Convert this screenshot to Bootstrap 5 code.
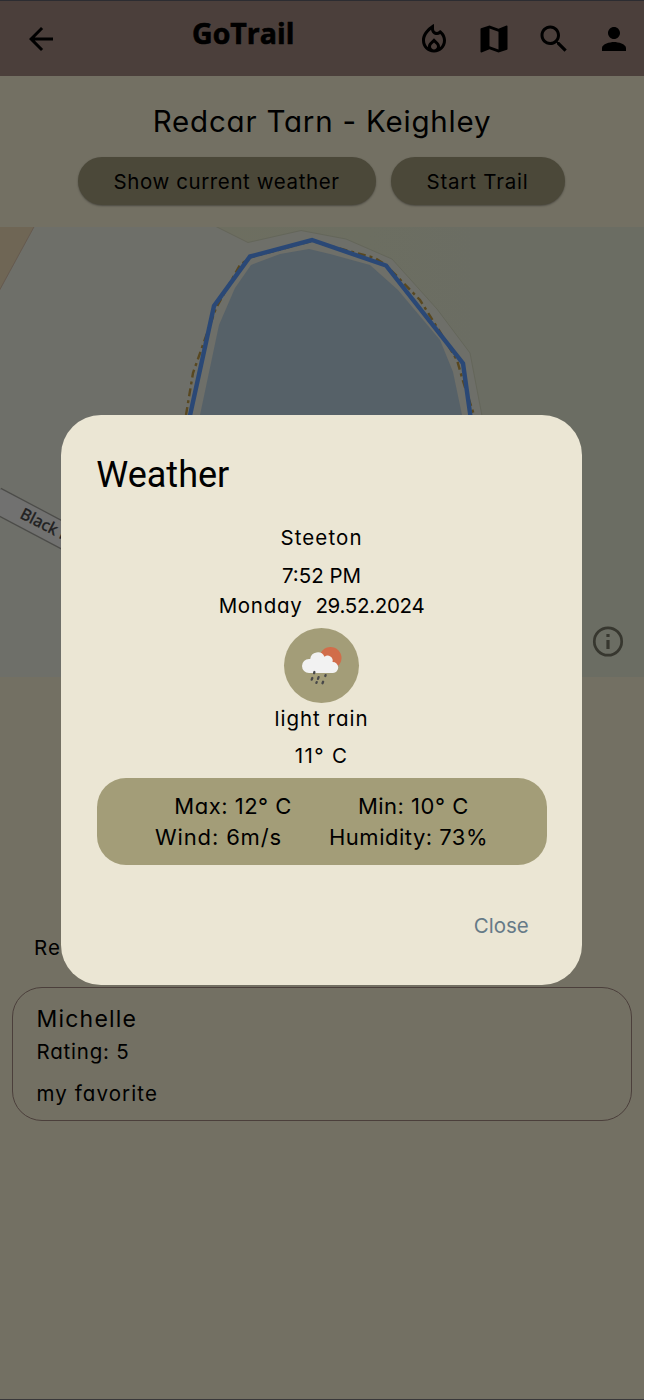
<!DOCTYPE html>
<html lang="en">
<head>
<meta charset="utf-8">
<meta name="viewport" content="width=device-width, initial-scale=1">
<title>GoTrail</title>
<link href="https://cdn.jsdelivr.net/npm/bootstrap@5.3.0/dist/css/bootstrap.min.css" rel="stylesheet">
<style>
  html, body { height: 1400px; overflow: hidden; }
  body { background: #fff; color: #000; font-family: Inter, "Noto Sans", sans-serif; font-feature-settings: "cv11"; font-size: 20.5px; }
  .screen { width: 644px; height: 1400px; background: #737063; border-top: 1px solid #2c2c31; border-bottom: 1px solid #39383a; }
  .topbar { height: 75px; background: #4b3f3b; padding: 0 12px 0 23px; }
  .brand { font: 700 28.5px/1 "Open Sans", sans-serif; padding-bottom: 10px; margin-left: 133px; -webkit-text-stroke: .6px #000; }
  .actions { gap: 24px; }
  .trail-title { font-size: 29.500px; line-height: 36px; padding-top: 27px; letter-spacing: .8px; }
  .trail-buttons { gap: 15px; margin: 18px 2px 0 0; }
  .pill { height: 48px; border-radius: 24px; background: #4b4839; border: 0; color: #000; font-size: inherit; padding: 0; box-shadow: 0 1px 2px rgba(0,0,0,.35); line-height: 49px; }
  .pill-weather { width: 298px; letter-spacing: .6px; }
  .pill-start { width: 174px; letter-spacing: .8px; }
  .map { height: 450px; margin-top: 22px; }
  .reviews { margin: 254px 0 24px 34px; line-height: 33px; height: 32px; letter-spacing: 1.2px; }
  .review { margin: 0 12.5px 0 11.5px; height: 134px; border: 1.500px solid #4b3f3b; border-radius: 30px; padding: 14px 24px; letter-spacing: .8px; }
  .review .who { font-size: 23px; line-height: 34px; letter-spacing: 1.2px; }
  .review .rating { line-height: 31px; }
  .review .comment { line-height: 53px; letter-spacing: 1.1px; }
  .sheet { width: 521.500px; height: 570px; background: #ebe6d4; border: 0; border-radius: 40px; padding: 36px 35.500px; margin: 415px 0 0 60.800px; }
  .sheet h1 { font: 400 36px/48px Roboto, sans-serif; height: 46px; margin-bottom: 22px; }
  .place { line-height: 38px; letter-spacing: 1.1px; }
  .clock { line-height: 37px; letter-spacing: 0; }
  .day { line-height: 23px; letter-spacing: .7px; gap: 13px; margin-bottom: 11px; }
  .day .date { letter-spacing: -.3px; }
  .sky { width: 75px; height: 75px; background: #a39d78; }
  .sky-text { line-height: 31px; height: 30px; letter-spacing: 1px; }
  .temp { line-height: 45px; letter-spacing: 1.400px; }
  .stats { width: 450px; height: 87px; border-radius: 29px; background: #a39d78; font-size: 22px; line-height: 31.5px; padding-top: 12.5px; letter-spacing: .5px; }
  .stats .temps { gap: 66px; }
  .stats .air { gap: 47px; }
  .stats .wind { letter-spacing: .85px; }
  .close-link { color: #667a87; line-height: 61px; margin: 30px 18px 0 0; letter-spacing: 0; }
</style>
</head>
<body>
<main class="screen d-flex flex-column">
  <nav class="topbar d-flex align-items-center flex-shrink-0">
    <svg width="36" height="36" viewBox="0 0 24 24"><path d="M20 11H7.83l5.59-5.59L12 4l-8 8 8 8 1.41-1.41L7.83 13H20z"/></svg>
    <span class="brand">GoTrail</span>
    <div class="actions d-flex ms-auto">
      <svg width="36" height="36" viewBox="0 0 24 24"><path d="M16 6l-.44.55c-.42.52-.98.75-1.54.75C13 7.300 12 6.520 12 5.300V2S4 6 4 13c0 4.420 3.580 8 8 8s8-3.580 8-8c0-2.960-1.610-5.620-4-7zm-4 13c-1.100 0-2-.87-2-1.940 0-.51.2-.99.58-1.360L12 14.300l1.430 1.400c.37.37.57.85.57 1.360 0 1.070-.9 1.940-2 1.940zm3.960-1.500c.04-.36.22-1.890-1.130-3.220L12 11.500l-2.830 2.780C7.810 15.620 8 17.160 8.040 17.500 6.790 16.400 6 14.790 6 13c0-3.160 2.130-5.650 4.030-7.250.23 1.990 1.930 3.550 3.990 3.550.78 0 1.540-.23 2.180-.66C17.340 9.780 18 11.350 18 13c0 1.790-.79 3.400-2.040 4.500z"/></svg>
      <svg width="36" height="36" viewBox="0 0 24 24"><path d="M20.500 3l-.16.03L15 5.100 9 3 3.360 4.900c-.21.07-.36.25-.36.48V20.500c0 .28.220.5.500.5l.16-.03L9 18.900l6 2.100 5.640-1.900c.21-.07.36-.25.36-.48V3.500c0-.28-.22-.5-.5-.5zM15 19l-6-2.110V5l6 2.110V19z"/></svg>
      <svg width="36" height="36" viewBox="0 0 24 24"><path d="M15.500 14h-.79l-.28-.27C15.410 12.590 16 11.110 16 9.500 16 5.910 13.090 3 9.500 3S3 5.910 3 9.500 5.910 16 9.500 16c1.610 0 3.090-.59 4.230-1.570l.27.28v.79l5 4.990L20.490 19l-4.990-5zm-6 0C7.010 14 5 11.990 5 9.500S7.010 5 9.500 5 14 7.010 14 9.500 11.990 14 9.500 14z"/></svg>
      <svg width="36" height="36" viewBox="0 0 24 24"><path d="M12 12c2.210 0 4-1.790 4-4s-1.790-4-4-4-4 1.790-4 4 1.790 4 4 4zm0 2c-2.670 0-8 1.340-8 4v2h16v-2c0-2.660-5.330-4-8-4z"/></svg>
    </div>
  </nav>
  <div class="trail-title text-center">Redcar Tarn - Keighley</div>
  <div class="trail-buttons d-flex justify-content-center">
    <button class="pill pill-weather">Show current weather</button>
    <button class="pill pill-start">Start Trail</button>
  </div>
  <svg class="map d-block flex-shrink-0" width="644" height="450" viewBox="0 227 644 450">
    <defs>
      <linearGradient id="moor"><stop offset="0" stop-color="#6d6e60"/><stop offset=".35" stop-color="#6c6e61"/><stop offset=".6" stop-color="#6b6d63"/></linearGradient>
    </defs>
    <rect y="227" width="644" height="451" fill="#6e6f69"/>
    <path d="M-2 225H35L-2 293z" fill="#6f6655" stroke="#665a4f"/>
    <path d="M215 226l33 16.500 53-12 45 8.500 46 20 45 50 33 44 13 68 20 260H647V225z" fill="url(#moor)" stroke="#64665a"/>
    <path d="M200 415L219 325 235 288 251 265 280 254 309 249 330 254 370 265 398 290 440 340 453 372 462 415z" fill="#566168"/>
    <path d="M186 415L193 373 210 325 216 308 240 265 251 257 312 241 345 250 375 258 386 265 420 300 440 332 457 360 463 381 474 415" fill="none" stroke="#594820" stroke-width="2.400" stroke-dasharray="8 4 3 4"/>
    <path d="M189 420L214 306 250 256.500 312 240 386 265.500 463 363.500 471 420" fill="none" stroke="#2a4876" stroke-width="4.400"/>
    <path d="M-5 499.500L80 544.500" stroke="#4c4c49" stroke-width="26.500"/>
    <path d="M-5 499.500L80 544.500" stroke="#717170" stroke-width="24"/>
    <text transform="translate(19 517.500) rotate(27)" font-family="Noto Sans, sans-serif" font-size="16" fill="#20201f" stroke="#20201f" stroke-width=".4">Black Hill</text>
    <g fill="none" stroke="#37372f" stroke-width="2.700"><circle cx="608" cy="641.500" r="13.700"/><path d="M608 640v9M608 634v3" stroke-width="3.200"/></g>
  </svg>
  <div class="reviews flex-shrink-0">Reviews</div>
  <section class="review flex-shrink-0">
    <div class="who">Michelle</div>
    <div class="rating">Rating: 5</div>
    <div class="comment">my favorite</div>
  </section>
</main>
<div class="modal d-block" tabindex="-1" role="dialog" aria-label="Weather">
  <div class="sheet d-flex flex-column">
    <h1>Weather</h1>
    <div class="d-flex flex-column align-items-center">
      <div class="place">Steeton</div>
      <div class="clock">7:52 PM</div>
      <div class="day d-flex"><span>Monday</span><span class="date">29.52.2024</span></div>
      <div class="sky rounded-circle">
        <svg class="d-block" width="75" height="75" viewBox="0 0 75 75">
          <circle cx="46.500" cy="30" r="11" fill="#d16d4a"/>
          <path d="M25 45a7 7 0 0 1 0-14h1.200a7.500 7.500 0 0 1 14.300-2.200 5 5 0 0 1 8 5.200 5.500 5.500 0 0 1 .5 11z" fill="#f2f2f2"/>
          <path d="M30.400 44l-.3 1.200M28.300 50l-.6 1.600M34.600 49.200l-.6 1.600M41.600 47.200l-.3.800M32.700 54.100l-.3.800M39.100 53.800l-.6 1.400" stroke="#484849" stroke-width="2.300" stroke-linecap="round"/>
        </svg>
      </div>
      <div class="sky-text">light rain</div>
      <div class="temp">11° C</div>
      <div class="stats">
        <div class="temps d-flex justify-content-center"><span>Max: 12° C</span><span>Min: 10° C</span></div>
        <div class="air d-flex justify-content-center"><span class="wind">Wind: 6m/s</span><span>Humidity: 73%</span></div>
      </div>
    </div>
    <div class="close-link align-self-end">Close</div>
  </div>
</div>
<script src="https://cdn.jsdelivr.net/npm/bootstrap@5.3.0/dist/js/bootstrap.bundle.min.js"></script>
</body>
</html>
